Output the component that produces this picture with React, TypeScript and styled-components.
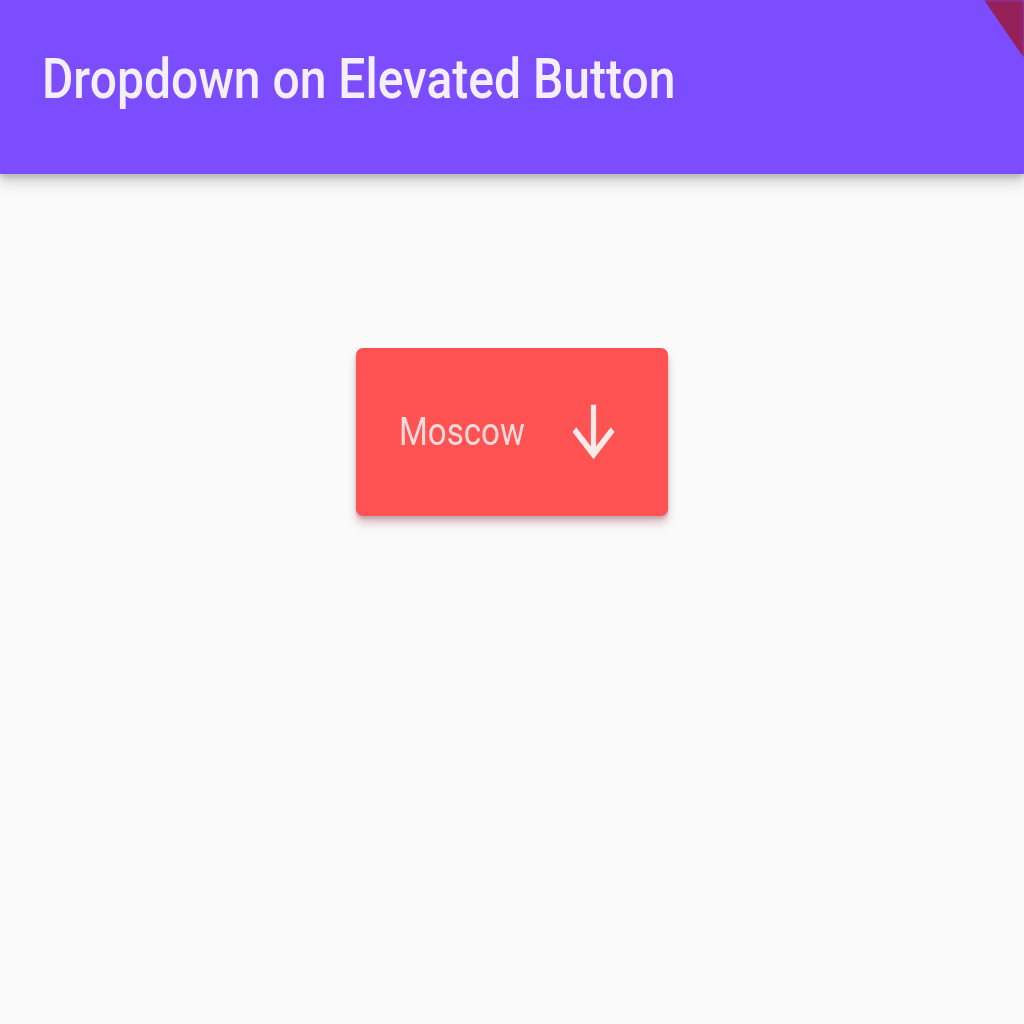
import React from "react";
import styled, { createGlobalStyle } from "styled-components";

const Global = createGlobalStyle`
  html, body { margin: 0; padding: 0; background: #fafafa; }
  body { font-family: Roboto, "Noto Sans", sans-serif; }
`;

const Page = styled.div`
  position: relative;
  width: 1024px;
  height: 1024px;
  background: #fafafa;
  overflow: hidden;
`;

const AppBar = styled.header`
  height: 174px;
  background: #7c4dff;
  display: flex;
  align-items: center;
  padding-left: 42px;
  padding-bottom: 16px;
  box-sizing: border-box;
  box-shadow: 0 10px 12px rgba(0, 0, 0, 0.13), 0 4px 5px rgba(0, 0, 0, 0.16);
  position: relative;
  z-index: 1;
`;

const Title = styled.h1`
  margin: 0;
  font-family: Roboto, sans-serif;
  font-weight: 500;
  font-size: 56px;
  color: #f4effe;
  white-space: nowrap;
  display: inline-block;
  transform: scaleX(0.857);
  transform-origin: left center;
`;

const Banner = styled.div`
  position: absolute;
  top: 0;
  right: 0;
  width: 40px;
  height: 58px;
  background: #962058;
  clip-path: polygon(0 0, 100% 0, 100% 100%);
  filter: blur(1.5px);
  z-index: 2;
`;

const Body = styled.main`
  display: flex;
  justify-content: center;
  padding-top: 174px;
`;

const Button = styled.button`
  width: 312px;
  height: 168px;
  border: none;
  border-radius: 7px;
  background: #ff5252;
  box-shadow: 0 7px 8px rgba(150, 50, 60, 0.3), 0 3px 3px rgba(0, 0, 0, 0.14);
  display: flex;
  align-items: center;
  justify-content: flex-start;
  padding: 0 0 0 43px;
  cursor: pointer;
`;

const Label = styled.span`
  font-family: Roboto, sans-serif;
  font-weight: 400;
  font-size: 38px;
  color: #f9dada;
  display: inline-block;
  width: 163px;
  text-align: left;
  transform: scaleX(0.87);
  transform-origin: left center;
`;

const ArrowIcon = () => (
  <svg width="63" height="82" viewBox="0 0 24 24" preserveAspectRatio="none">
    <path
      fill="#fbeaea"
      d="M20 12l-1.41-1.41L13 16.17V4h-2v12.17l-5.58-5.59L4 12l8 8 8-8z"
    />
  </svg>
);

export default function App() {
  return (
    <Page>
      <Global />
      <AppBar>
        <Title>Dropdown on Elevated Button</Title>
      </AppBar>
      <Banner />
      <Body>
        <Button>
          <Label>Moscow</Label>
          <ArrowIcon />
        </Button>
      </Body>
    </Page>
  );
}
